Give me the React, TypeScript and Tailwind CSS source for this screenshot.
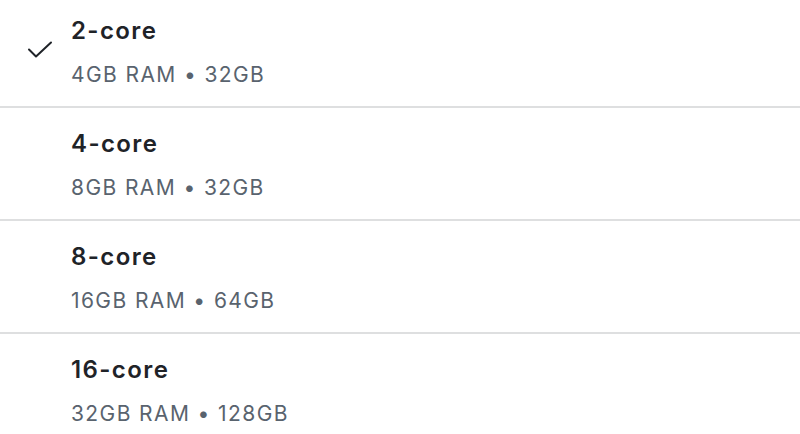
import React from 'react';

const options = [
  { name: '2-core', specs: '4GB RAM • 32GB', selected: true },
  { name: '4-core', specs: '8GB RAM • 32GB' },
  { name: '8-core', specs: '16GB RAM • 64GB' },
  { name: '16-core', specs: '32GB RAM • 128GB' },
];

const Check = () => (
  <svg width="26" height="24" viewBox="0 0 26 24" fill="none" stroke="#1f2328" strokeWidth="2" strokeLinecap="round" strokeLinejoin="round">
    <path d="M2 12.5l7 7L24 5.5" />
  </svg>
);

export default function App() {
  return (
    <div className="w-[800px] h-[434px] overflow-hidden bg-white font-['Inter',sans-serif]">
      <div className="-mt-[5px]">
        {options.map((opt) => (
          <div key={opt.name} className="flex h-[113px] border-b-2 border-[#dedfe0]">
            <div className="w-[71px] flex items-center pl-[27px] pb-[4px]">
              {opt.selected && <Check />}
            </div>
            <div className="flex flex-col pt-[21px]">
              <span className="text-[24px] leading-[30px] font-semibold tracking-[1.4px] text-[#1f2328]">{opt.name}</span>
              <span className="mt-[16px] text-[21px] leading-[26px] tracking-[1.4px] text-[#59636e]">{opt.specs}</span>
            </div>
          </div>
        ))}
      </div>
    </div>
  );
}
